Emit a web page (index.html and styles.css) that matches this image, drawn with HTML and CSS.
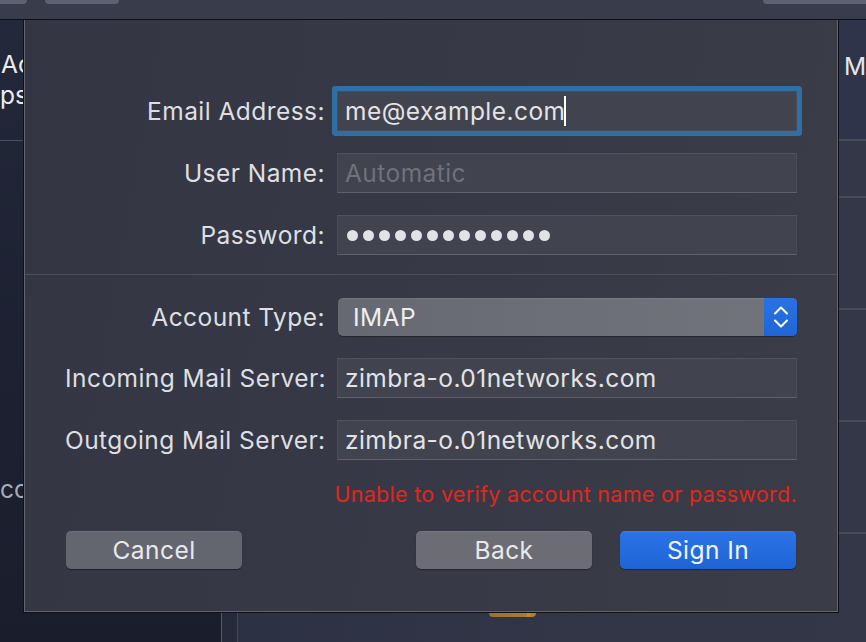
FILE: index.html
```html
<!DOCTYPE html>
<html lang="en">
<head>
<meta charset="utf-8">
<title>Add Mail Account</title>
<link rel="stylesheet" href="styles.css">
</head>
<body>
<div class="window">
  <div class="toolbar">
    <span class="pill pill-a"></span>
    <span class="pill pill-b"></span>
    <span class="spacer"></span>
    <span class="pill pill-c"></span>
  </div>
  <div class="content">
    <aside class="sidebar">
      <div class="side-head">
        <div class="side-line">Ac</div>
        <div class="side-line side-line-2">ps</div>
      </div>
      <div class="side-body">
        <div class="side-muted">cc</div>
      </div>
    </aside>
    <div class="divider-col"></div>
    <main class="list">
      <div class="list-head"><span class="list-title">M</span></div>
      <div class="list-row r1"></div>
      <div class="list-row r2"></div>
      <div class="list-row r2"></div>
      <div class="list-row r2"></div>
      <span class="tab"></span>
    </main>

    <section class="sheet">
      <div class="group">
        <div class="row">
          <label class="label">Email Address:</label>
          <div class="field focused"><span class="value">me@example.com</span><span class="caret"></span></div>
        </div>
        <div class="row">
          <label class="label">User Name:</label>
          <div class="field"><span class="placeholder">Automatic</span></div>
        </div>
        <div class="row">
          <label class="label">Password:</label>
          <div class="field dots">
            <i></i><i></i><i></i><i></i><i></i><i></i><i></i><i></i><i></i><i></i><i></i><i></i><i></i>
          </div>
        </div>
      </div>
      <div class="separator"></div>
      <div class="group group-2">
        <div class="row row-popup">
          <label class="label">Account Type:</label>
          <div class="popup">
            <span class="popup-label">IMAP</span>
            <span class="stepper">
              <svg width="16" height="24" viewBox="0 0 16 24" fill="none" stroke="#ffffff" stroke-width="2" stroke-linecap="round" stroke-linejoin="round"><path d="M2 8.5 L8 2.5 L14 8.5"/><path d="M2 15.5 L8 21.5 L14 15.5"/></svg>
            </span>
          </div>
        </div>
        <div class="row">
          <label class="label">Incoming Mail Server:</label>
          <div class="field"><span class="value">zimbra-o.01networks.com</span></div>
        </div>
        <div class="row">
          <label class="label">Outgoing Mail Server:</label>
          <div class="field"><span class="value">zimbra-o.01networks.com</span></div>
        </div>
      </div>
      <p class="error">Unable to verify account name or password.</p>
      <div class="buttons">
        <button class="btn">Cancel</button>
        <div class="btn-group">
          <button class="btn btn-back">Back</button>
          <button class="btn btn-primary">Sign In</button>
        </div>
      </div>
    </section>
  </div>
</div>
</body>
</html>
```

FILE: styles.css
```css
* { box-sizing: border-box; }

html, body {
  margin: 0;
  padding: 0;
}

body {
  width: 866px;
  height: 642px;
  overflow: hidden;
  background: #2f3345;
  font-family: "Inter", "Liberation Sans", sans-serif;
  color: #dfe0e3;
}

.window {
  display: flex;
  flex-direction: column;
  width: 866px;
  height: 642px;
}

/* toolbar */
.toolbar {
  display: flex;
  align-items: flex-start;
  height: 20px;
  flex: none;
  background: #393c4b;
  border-bottom: 1px solid #0e0f13;
}
.pill {
  display: block;
  height: 4px;
  background: #5f626d;
  border-radius: 0 0 5px 5px;
}
.pill-a { width: 27px; border-radius: 0 0 5px 0; }
.pill-b { width: 74px; margin-left: 18px; }
.spacer { flex: 1; }
.pill-c { width: 103px; border-radius: 0 0 0 6px; }

/* background content */
.content {
  position: relative;
  flex: 1;
  display: flex;
  min-height: 0;
}

.sidebar {
  width: 221px;
  flex: none;
  display: flex;
  flex-direction: column;
  background: linear-gradient(180deg, #23283a 0%, #1c2031 60%, #1a1e2c 100%);
}
.side-head {
  height: 121px;
  padding-top: 29px;
  border-bottom: 1px solid #4a4d5a;
  color: #ececee;
  font-size: 24.5px;
  line-height: 31px;
}
.side-line { padding-left: 1px; }
.side-line-2 { padding-left: 0; }
.side-body {
  flex: 1;
  padding-top: 334px;
}
.side-muted {
  color: #a9abb3;
  font-size: 24.5px;
  line-height: 28px;
  padding-left: 0;
}

.divider-col {
  width: 17px;
  flex: none;
  background: #262a3a;
  border-left: 1px solid #565966;
  border-right: 1px solid #454856;
}

.list {
  position: relative;
  flex: 1;
  display: flex;
  flex-direction: column;
  background: linear-gradient(90deg, #2d3144 0%, #323647 60%, #343748 100%);
}
.list-head {
  height: 121px;
  flex: none;
  padding: 31px 0 0 606px;
  border-bottom: 2px solid #474b5a;
  background: #30344a;
}
.list-title {
  font-size: 24.5px;
  color: #e6e6ea;
}
.list-row {
  flex: none;
  border-bottom: 2px solid #464a59;
}
.r1 { height: 57px; }
.r2 { height: 112px; }

.tab {
  position: absolute;
  left: 251px;
  top: 589px;
  width: 47px;
  height: 8px;
  background: linear-gradient(90deg, #9a7032 0%, #a87b36 80%, #c98a2a 82%, #a6782f 100%);
  border-radius: 0 0 4px 4px;
}

/* sheet */
.sheet {
  position: absolute;
  left: 24px;
  top: 0;
  width: 814px;
  height: 592px;
  background: linear-gradient(100deg, #343743 0%, #373a46 55%, #3a3c47 100%);
  border: 1px solid #62656e;
  border-top: none;
  box-shadow: 0 0 0 1px #0f1014;
  padding-top: 71px;
}

.group {
  display: flex;
  flex-direction: column;
  gap: 22px;
  padding: 0 40px;
}
.group-2 { padding-top: 23px; gap: 23px; }
.group-2 .row + .row { margin-top: -1px; }

.row {
  display: grid;
  grid-template-columns: 260px 460px;
  column-gap: 12px;
  align-items: center;
  height: 40px;
}
.row-popup { height: 38px; }

.label {
  text-align: right;
  font-size: 24.5px;
  letter-spacing: 0.45px;
  color: #dedfe2;
  white-space: nowrap;
}

.field {
  height: 40px;
  display: flex;
  align-items: center;
  padding-left: 7px;
  background: #41434e;
  border: 1px solid #4a4c56;
  border-top-color: #50525c;
  border-bottom-color: #60626b;
  font-size: 24.5px;
  letter-spacing: 0.45px;
  color: #e3e3e6;
}
.focused {
  border-radius: 1px;
  border-color: #4a4c57;
  box-shadow: 0 0 0 5px #2f6fa4;
}
.caret {
  display: block;
  width: 2px;
  height: 30px;
  background: #ffffff;
  margin-left: -1px;
}
.placeholder { color: #6f727c; }

.dots {
  gap: 5px;
  padding-left: 9px;
}
.dots i {
  display: block;
  width: 11px;
  height: 11px;
  border-radius: 50%;
  background: #e2e2e5;
}

.separator {
  height: 1px;
  margin-top: 19px;
  background: #4e515c;
}

.popup {
  height: 38px;
  margin-left: 1px;
  display: flex;
  border-radius: 5px;
  background: linear-gradient(90deg, #666972 0%, #6e7079 60%, #72747c 100%);
  box-shadow: 0 1px 1px rgba(0, 0, 0, 0.35), inset 0 1px 0 rgba(255, 255, 255, 0.08);
  overflow: hidden;
}
.popup-label {
  flex: 1;
  display: flex;
  align-items: center;
  padding-left: 15px;
  font-size: 24.5px;
  letter-spacing: 0.45px;
  color: #eeeef0;
}
.stepper {
  width: 33px;
  display: flex;
  align-items: center;
  justify-content: center;
  background: linear-gradient(180deg, #2a72e3 0%, #1f65d6 100%);
}

.error {
  margin: 22px 40px 0 0;
  height: 24px;
  line-height: 24px;
  text-align: right;
  font-size: 21.5px;
  letter-spacing: 0.3px;
  color: #e2261b;
}

.buttons {
  display: flex;
  justify-content: space-between;
  margin-top: 25px;
  padding: 0 41px;
}
.btn-group {
  display: flex;
  gap: 28px;
}
.btn {
  width: 176px;
  height: 38px;
  border: none;
  border-radius: 5px;
  background: #63666f;
  color: #e9e9ec;
  font-family: "Inter", "Liberation Sans", sans-serif;
  font-size: 24.5px;
  letter-spacing: 0.45px;
  padding: 0;
  box-shadow: 0 1px 1px rgba(0, 0, 0, 0.4), inset 0 1px 0 rgba(255, 255, 255, 0.07);
}
.btn-back { background: #6c6d74; }
.btn-primary {
  background: linear-gradient(180deg, #2b73e6 0%, #1e64d7 100%);
  color: #f2f5fc;
}
```
